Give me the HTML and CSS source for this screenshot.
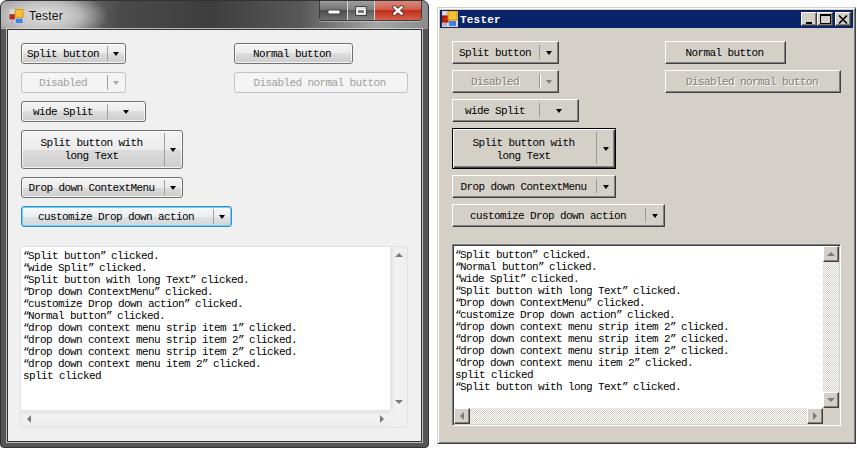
FILE: index.html
```html
<!DOCTYPE html>
<html lang="en">
<head>
<meta charset="utf-8">
<title>Tester</title>
<link rel="stylesheet" href="styles.css">
</head>
<body>
<div class="window aero">
  <div class="titlebar">
    <svg class="appicon" width="15" height="14" viewBox="0 0 16 16"><rect x="0" y="0" width="16" height="16" fill="#d8d8d8"/><rect x="0.5" y="6.5" width="5" height="5" fill="#d02010" stroke="#a03020"/><rect x="6.5" y="0.5" width="9" height="9" fill="#f8c030" stroke="#d09000"/><rect x="7" y="11" width="8" height="5" fill="#4080e0"/><rect x="1" y="13" width="4" height="3" fill="#b0b0b0"/></svg>
    <span class="title">Tester</span>
    <div class="caption">
      <div class="cap cap-min"><svg width="14" height="8" viewBox="0 0 14 8"><rect x="1" y="3" width="12" height="4" fill="#fff" stroke="#444"/></svg></div>
      <div class="cap cap-max"><svg width="12" height="10" viewBox="0 0 12 10"><rect x="0.5" y="0.5" width="11" height="9" fill="#ddd" stroke="#444"/><rect x="2.5" y="3.5" width="7" height="4" fill="#777" stroke="#fff"/></svg></div>
      <div class="cap cap-close"><svg width="14" height="11" viewBox="0 0 14 11"><path d="M2 1 L12 10 M12 1 L2 10" stroke="#5a1a10" stroke-width="4"/><path d="M2.5 1.5 L11.5 9.5 M11.5 1.5 L2.5 9.5" stroke="#fff" stroke-width="2.4"/></svg></div>
    </div>
  </div>
  <div class="client">
    <div class="row">
      <div class="col"><div class="btn b-split"><span class="label">Split button</span><span class="drop d-small"><i class="arrow"></i></span></div></div>
      <div class="btn b-normal"><span class="label">Normal button</span></div>
    </div>
    <div class="row">
      <div class="col"><div class="btn b-split off"><span class="label">Disabled</span><span class="drop d-small"><i class="arrow"></i></span></div></div>
      <div class="btn b-normal-off off"><span class="label">Disabled normal button</span></div>
    </div>
    <div class="row">
      <div class="btn b-wide"><span class="label">wide Split</span><span class="drop d-wide"><i class="arrow"></i></span></div>
    </div>
    <div class="row">
      <div class="btn b-long tall"><span class="label">Split button with<br>long Text</span><span class="drop d-small"><i class="arrow"></i></span></div>
    </div>
    <div class="row">
      <div class="btn b-long"><span class="label">Drop down ContextMenu</span><span class="drop d-small"><i class="arrow"></i></span></div>
    </div>
    <div class="row">
      <div class="btn b-custom focus"><span class="label">customize Drop down action</span><span class="drop d-small"><i class="arrow"></i></span></div>
    </div>
    <div class="textbox">
      <div class="log"><span class="q">“</span>Split button<span class="q">”</span> clicked.
<span class="q">“</span>wide Split<span class="q">”</span> clicked.
<span class="q">“</span>Split button with long Text<span class="q">”</span> clicked.
<span class="q">“</span>Drop down ContextMenu<span class="q">”</span> clicked.
<span class="q">“</span>customize Drop down action<span class="q">”</span> clicked.
<span class="q">“</span>Normal button<span class="q">”</span> clicked.
<span class="q">“</span>drop down context menu strip item 1<span class="q">”</span> clicked.
<span class="q">“</span>drop down context menu strip item 2<span class="q">”</span> clicked.
<span class="q">“</span>drop down context menu strip item 2<span class="q">”</span> clicked.
<span class="q">“</span>drop down context menu item 2<span class="q">”</span> clicked.
split clicked</div>
      <div class="vbar"><span class="sb sb-up"><i class="tri up"></i></span><span class="sb sb-down"><i class="tri down"></i></span></div>
      <div class="hbar"><span class="sb sb-left"><i class="tri left"></i></span><span class="sb sb-right"><i class="tri right"></i></span></div>
      <div class="corner"></div>
    </div>
  </div>
</div>

<div class="window classic">
  <div class="titlebar">
    <svg class="appicon" width="16" height="16" viewBox="0 0 16 16"><rect x="0" y="0" width="16" height="16" fill="#d8d8d8"/><rect x="0" y="5" width="6" height="6" fill="#d02010" stroke="#801000"/><rect x="6" y="0" width="9" height="9" fill="#f8c030" stroke="#d09000"/><rect x="7" y="10" width="7" height="5" fill="#4080e0"/><rect x="1" y="12" width="4" height="3" fill="#b0b0b0"/></svg>
    <span class="title">Tester</span>
    <div class="caption">
      <div class="cap cap-min"><svg width="8" height="9" viewBox="0 0 8 9"><rect x="1" y="7" width="6" height="2" fill="#000"/></svg></div>
      <div class="cap cap-max"><svg width="11" height="10" viewBox="0 0 11 10"><rect x="0.5" y="1" width="10" height="8.5" fill="none" stroke="#000"/><rect x="0" y="0" width="11" height="2" fill="#000"/></svg></div>
      <div class="cap cap-close"><svg width="10" height="9" viewBox="0 0 10 9"><path d="M1 0.5 L9 8.5 M9 0.5 L1 8.5" stroke="#000" stroke-width="1.6"/></svg></div>
    </div>
  </div>
  <div class="client">
    <div class="row">
      <div class="col"><div class="btn b-split"><span class="label">Split button</span><span class="drop d-small"><i class="arrow"></i></span></div></div>
      <div class="btn b-normal"><span class="label">Normal button</span></div>
    </div>
    <div class="row">
      <div class="col"><div class="btn b-split off"><span class="label">Disabled</span><span class="drop d-small"><i class="arrow"></i></span></div></div>
      <div class="btn b-normal-off off"><span class="label">Disabled normal button</span></div>
    </div>
    <div class="row">
      <div class="btn b-wide"><span class="label">wide Split</span><span class="drop d-wide"><i class="arrow"></i></span></div>
    </div>
    <div class="row">
      <div class="btn b-long tall default"><span class="label">Split button with<br>long Text</span><span class="drop d-small"><i class="arrow"></i></span></div>
    </div>
    <div class="row">
      <div class="btn b-long"><span class="label">Drop down ContextMenu</span><span class="drop d-small"><i class="arrow"></i></span></div>
    </div>
    <div class="row">
      <div class="btn b-custom"><span class="label">customize Drop down action</span><span class="drop d-small"><i class="arrow"></i></span></div>
    </div>
    <div class="textbox">
      <div class="log"><span class="q">“</span>Split button<span class="q">”</span> clicked.
<span class="q">“</span>Normal button<span class="q">”</span> clicked.
<span class="q">“</span>wide Split<span class="q">”</span> clicked.
<span class="q">“</span>Split button with long Text<span class="q">”</span> clicked.
<span class="q">“</span>Drop down ContextMenu<span class="q">”</span> clicked.
<span class="q">“</span>customize Drop down action<span class="q">”</span> clicked.
<span class="q">“</span>drop down context menu strip item 2<span class="q">”</span> clicked.
<span class="q">“</span>drop down context menu strip item 2<span class="q">”</span> clicked.
<span class="q">“</span>drop down context menu strip item 2<span class="q">”</span> clicked.
<span class="q">“</span>drop down context menu item 2<span class="q">”</span> clicked.
split clicked
<span class="q">“</span>Split button with long Text<span class="q">”</span> clicked.</div>
      <div class="vbar"><span class="sb sb-up"><i class="tri up"></i></span><span class="sb sb-down"><i class="tri down"></i></span></div>
      <div class="hbar"><span class="sb sb-left"><i class="tri left"></i></span><span class="sb sb-right"><i class="tri right"></i></span></div>
      <div class="corner"></div>
    </div>
  </div>
</div>
</body>
</html>
```
FILE: styles.css
```css
* { box-sizing: border-box; }
html, body { margin: 0; padding: 0; }
body {
  width: 857px;
  height: 449px;
  background: #fff;
  overflow: hidden;
  position: relative;
  font-family: "Liberation Mono", "DejaVu Sans Mono", monospace;
  font-size: 11px;
  letter-spacing: -0.6px;
  color: #000;
}

/* windows on the desktop */
.window { position: absolute; display: flex; flex-direction: column; }
.titlebar { display: flex; align-items: center; flex: none; }
.title { flex: none; }
.caption { display: flex; margin-left: auto; }
.cap { display: flex; align-items: center; justify-content: center; }
.client { flex: 1; display: flex; flex-direction: column; }
.row { display: flex; flex: none; }
.col { width: 213px; flex: none; }

/* button common */
.btn { display: flex; align-items: stretch; position: relative; }
.label {
  flex: 1;
  display: flex;
  align-items: center;
  justify-content: center;
  text-align: center;
  line-height: 13px;
  white-space: nowrap;
}
.drop { flex: none; display: flex; align-items: center; justify-content: center; }
.arrow {
  display: block;
  width: 0;
  height: 0;
  border-left: 3.5px solid transparent;
  border-right: 3.5px solid transparent;
  border-top: 4px solid #000;
}

/* ---------- Aero window ---------- */
.aero {
  left: 0;
  top: 0;
  width: 429px;
  height: 448px;
  background: #565656;
  border: 1px solid #333;
  border-radius: 7px 7px 4px 4px;
  padding: 0 6px 6px 6px;
}
.aero .titlebar {
  height: 28px;
  margin: 0 -6px;
  padding-left: 8px;
  border-radius: 6px 6px 0 0;
  align-items: flex-start;
  background:
    radial-gradient(ellipse 62px 26px at 45px 15px, rgba(232,232,232,.95) 0%, rgba(210,210,210,.75) 55%, rgba(160,160,160,0) 100%),
    linear-gradient(90deg, #9c9c9c 0, #7a7a7a 60px, #4a4a4a 120px, #3e3e3e 210px, #585858 300px, #a6a6a6 375px, #8c8c8c 427px);
}
.aero .appicon { margin-top: 8px; }
.aero .title {
  margin: 8px 0 0 5px;
  font: 12px/14px "Liberation Sans", Arial, sans-serif;
  letter-spacing: 0.2px;
  color: #111;
}
.aero .caption {
  margin-right: 6px;
  height: 20px;
  border: 1px solid #3a3a3a;
  border-top: 0;
  border-radius: 0 0 4px 4px;
  overflow: hidden;
  box-shadow: 0 1px 0 rgba(255,255,255,.35);
}
.aero .cap-min { width: 28px; background: linear-gradient(#9a9a9a, #6e6e6e 50%, #4c4c4c 50%, #707070); border-right: 1px solid #d8d8d8; }
.aero .cap-max { width: 27px; background: linear-gradient(#9e9e9e, #7c7c7c 50%, #5c5c5c 50%, #848484); border-right: 1px solid #d8d8d8; }
.aero .cap-close { width: 46px; background: linear-gradient(#d88a7c, #cf5a46 50%, #bf2f1a 50%, #d8604a); }
.aero .client {
  background: #f0f0f0;
  padding: 13px 0 0 13px;
  border: 1px solid #333;
  box-shadow: 0 0 0 1px rgba(225,225,225,.75);
  flex: none;
  height: 413px;
}
.aero .row { margin-bottom: 8px; }
.aero .label { padding: 1px 3px 0 0; }

.aero .btn {
  height: 21px;
  border: 1px solid #707070;
  border-radius: 3px;
  background: linear-gradient(#f4f4f4 0, #ebebeb 50%, #dcdcdc 50%, #cdcdcd 100%);
  box-shadow: inset 0 0 0 1px rgba(255,255,255,.75);
}
.aero .btn.tall { height: 39px; }
.aero .drop::before,
.classic .drop::before {
  content: "";
  position: absolute;
  top: 2px;
  bottom: 2px;
  width: 1px;
  margin-left: -18px;
  background: #a0a0a0;
}
.aero .d-small { width: 18px; }
.aero .d-wide { width: 38px; }
.aero .d-wide::before { margin-left: -38px; }
.aero .b-split { width: 105px; }
.aero .b-wide { width: 125px; }
.aero .b-long { width: 162px; }
.aero .b-custom { width: 211px; }
.aero .b-normal { width: 119px; }
.aero .b-normal-off { width: 174px; }
.aero .btn.off {
  border-color: #c0c4c6;
  background: #f4f4f4;
  box-shadow: none;
  color: #a0a0a0;
}
.aero .btn.off .arrow { border-top-color: #a8a8a8; }
.aero .btn.focus {
  border-color: #2f8fc8;
  background: linear-gradient(#f6f8f9 0, #eceff1 50%, #dfe3e5 50%, #d2d6d8 100%);
  box-shadow: inset 0 0 0 1px #72d0f2;
}
.aero .textbox {
  margin: 11px 0 0 -1px;
  width: 388px;
  height: 182px;
  border: 1px solid #dbe3ec;
  display: grid;
  grid-template-columns: 1fr 17px;
  grid-template-rows: 1fr 17px;
  background: #fff;
}
.log {
  overflow: hidden;
  white-space: pre;
  line-height: 12px;
  padding: 3px 0 0 2px;
}
.q { letter-spacing: -1.6px; }
.vbar, .hbar { display: flex; justify-content: space-between; }
.vbar { flex-direction: column; }
.sb { display: flex; align-items: center; justify-content: center; flex: none; width: 16px; height: 16px; }
.tri { display: block; width: 0; height: 0; }
.tri.up { border-left: 4px solid transparent; border-right: 4px solid transparent; border-bottom: 4px solid #7a7a7a; }
.tri.down { border-left: 4px solid transparent; border-right: 4px solid transparent; border-top: 4px solid #7a7a7a; }
.tri.left { border-top: 4px solid transparent; border-bottom: 4px solid transparent; border-right: 4px solid #7a7a7a; }
.tri.right { border-top: 4px solid transparent; border-bottom: 4px solid transparent; border-left: 4px solid #7a7a7a; }
.aero .vbar { background: linear-gradient(90deg, #e4e4e4, #f2f2f2 30%, #ededed); border-left: 1px solid #e6e6e6; }
.aero .hbar { background: linear-gradient(#e4e4e4, #f2f2f2 30%, #ededed); border-top: 1px solid #e6e6e6; }
.aero .corner { background: #f0f0f0; }

/* ---------- Classic window ---------- */
.classic {
  left: 437px;
  top: 7px;
  width: 419px;
  height: 437px;
  background: #d4d0c8;
  border: 1px solid;
  border-color: #d4d0c8 #404040 #404040 #d4d0c8;
  box-shadow: inset 1px 1px 0 #fff, inset -1px -1px 0 #808080;
  padding: 2px;
}
.classic .titlebar {
  height: 18px;
  padding-left: 2px;
  background: #0a246a;
}
.classic .title {
  margin: 1px 0 0 2px;
  color: #fff;
  font: bold 11px/16px "Liberation Mono", monospace;
  letter-spacing: 0.2px;
}
.classic .caption { margin-right: 2px; }
.classic .cap {
  width: 16px;
  height: 14px;
  background: #d4d0c8;
  border: 1px solid;
  border-color: #fff #404040 #404040 #fff;
  box-shadow: inset -1px -1px 0 #808080;
}
.classic .cap-close { margin-left: 2px; }
.classic .client { padding: 13px 0 0 12px; }
.classic .row { margin-bottom: 6px; }
.classic .label { padding: 2px 2px 0 0; }
.classic .btn {
  height: 23px;
  background: #d4d0c8;
  border: 1px solid;
  border-color: #fff #404040 #404040 #fff;
  box-shadow: inset -1px -1px 0 #808080;
}
.classic .btn.tall { height: 41px; }
.classic .btn.default {
  border: 1px solid #000;
  box-shadow: inset 1px 1px 0 #fff, inset -1px -1px 0 #404040, inset -2px -2px 0 #808080;
}
.classic .d-small { width: 19px; }
.classic .d-wide { width: 39px; }
.classic .d-small::before { margin-left: -19px; top: 3px; bottom: 4px; background: #999; }
.classic .d-wide::before { margin-left: -39px; top: 3px; bottom: 4px; background: #999; }
.classic .b-split { width: 107px; }
.classic .b-wide { width: 127px; }
.classic .b-long { width: 164px; }
.classic .b-custom { width: 213px; }
.classic .b-normal { width: 121px; }
.classic .b-normal-off { width: 176px; }
.classic .btn.off { color: #808080; text-shadow: 1px 1px 0 #fff; }
.classic .btn.off .arrow { border-top-color: #808080; }
.classic .btn.off .drop::before { box-shadow: 1px 0 0 #fff; }
.classic .textbox {
  margin: 11px 0 0 0;
  width: 389px;
  height: 182px;
  border: 1px solid;
  border-color: #808080 #fff #fff #808080;
  box-shadow: inset 1px 1px 0 #404040, inset -1px -1px 0 #d4d0c8;
  padding: 1px;
  display: grid;
  grid-template-columns: 1fr 16px;
  grid-template-rows: 1fr 16px;
  background: #fff;
}
.classic .log { padding: 3px 0 0 1px; }
.classic .vbar, .classic .hbar {
  background: repeating-conic-gradient(#fff 0 25%, #d4d0c8 0 50%) 0 0 / 2px 2px;
}
.classic .sb {
  background: #d4d0c8;
  border: 1px solid;
  border-color: #fff #404040 #404040 #fff;
  box-shadow: inset -1px -1px 0 #808080;
}
.classic .corner { background: #d4d0c8; }
```
